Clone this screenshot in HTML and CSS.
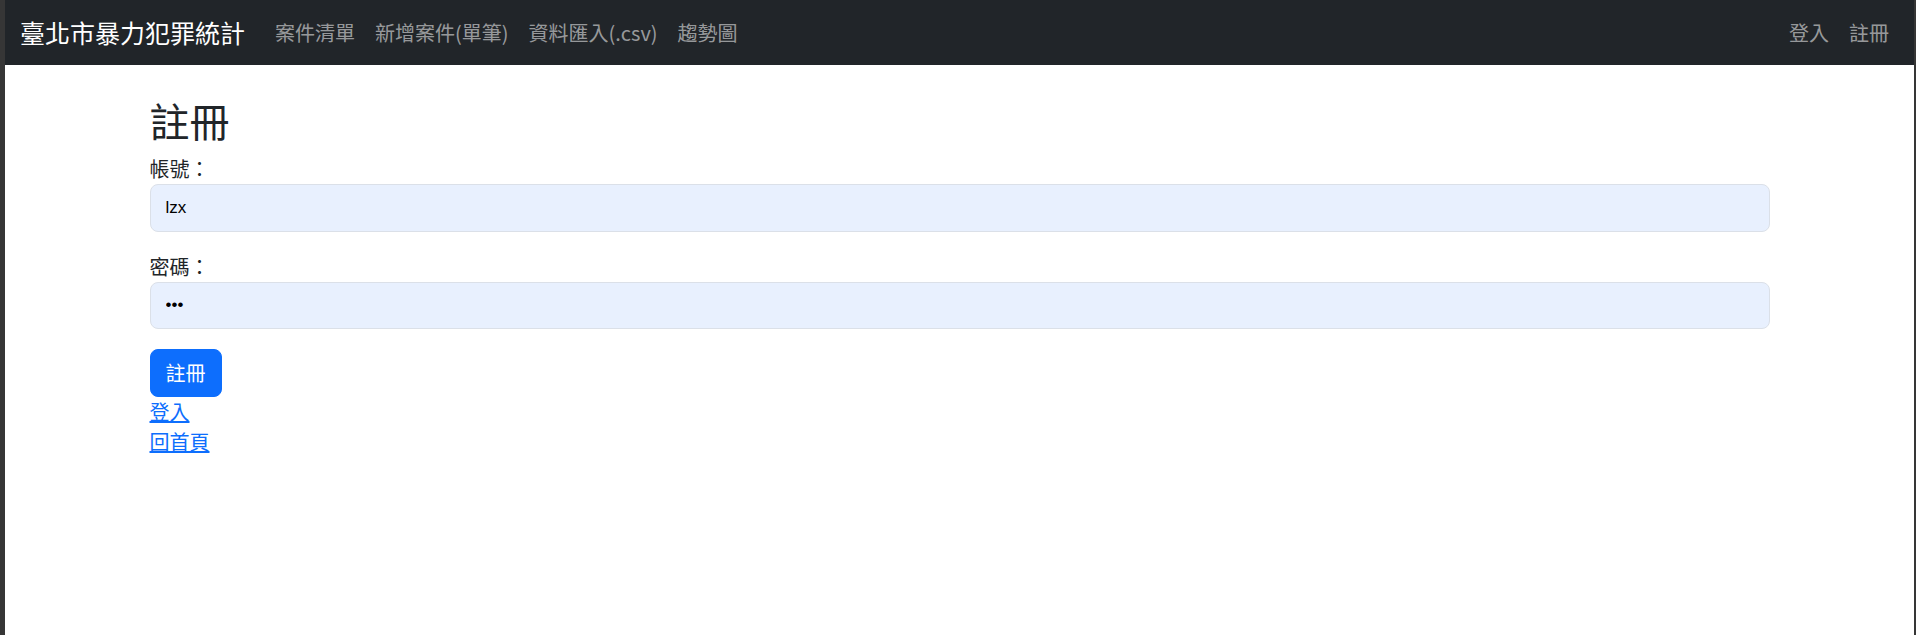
FILE: index.html
```html
<!DOCTYPE html>
<html lang="zh-Hant">
<head>
<meta charset="utf-8">
<title>註冊</title>
<link rel="stylesheet" href="styles.css">
</head>
<body>
<div class="frame">
  <nav class="navbar">
    <a class="brand" href="#">臺北市暴力犯罪統計</a>
    <ul class="nav">
      <li><a class="nav-link" href="#">案件清單</a></li>
      <li><a class="nav-link" href="#">新增案件(單筆)</a></li>
      <li><a class="nav-link" href="#">資料匯入(.csv)</a></li>
      <li><a class="nav-link" href="#">趨勢圖</a></li>
    </ul>
    <ul class="nav nav-right">
      <li><a class="nav-link" href="#">登入</a></li>
      <li><a class="nav-link" href="#">註冊</a></li>
    </ul>
  </nav>
  <main class="container">
    <h2 class="title">註冊</h2>
    <form class="form">
      <div class="field">
        <label class="label" for="acc">帳號：</label>
        <input class="input" id="acc" type="text" value="lzx">
      </div>
      <div class="field">
        <label class="label" for="pwd">密碼：</label>
        <input class="input" id="pwd" type="password" value="abc">
      </div>
      <button class="btn" type="button">註冊</button>
    </form>
    <div class="links">
      <div><a class="link" href="#">登入</a></div>
      <div><a class="link" href="#">回首頁</a></div>
    </div>
  </main>
</div>
</body>
</html>
```

FILE: styles.css
```css
* { box-sizing: border-box; }
html, body { margin: 0; padding: 0; }
body {
  font-family: "Noto Sans CJK TC", "Segoe UI", Roboto, sans-serif;
  font-size: 20px;
  line-height: 1.5;
  color: #212529;
  background: #ffffff;
}
.frame {
  min-height: 100vh;
  border-left: 5px solid #363636;
  border-right: 2px solid #363636;
  display: flex;
  flex-direction: column;
}
.navbar {
  background: #212529;
  display: flex;
  align-items: center;
  padding: 10px 15px;
  height: 65px;
}
.brand {
  color: #ffffff;
  font-size: 25px;
  line-height: 37px;
  padding: 4px 0;
  margin-right: 20px;
  text-decoration: none;
}
.nav {
  list-style: none;
  margin: 0;
  padding: 0;
  display: flex;
}
.nav-right { margin-left: auto; }
.nav-link {
  display: block;
  padding: 8px 10px;
  color: rgba(255, 255, 255, 0.55);
  text-decoration: none;
  line-height: 30px;
}
.container {
  width: 100%;
  max-width: 1650px;
  margin: 31px auto 0;
  padding: 0 15px;
}
.title {
  font-size: 40px;
  font-weight: 400;
  line-height: 1.2;
  margin: 0 0 10px;
}
.form { margin: 0; }
.field { margin-bottom: 20px; }
.label { display: block; line-height: 30px; }
.input {
  display: block;
  width: 100%;
  height: 47.5px;
  padding: 0 15px;
  border: 1px solid #dbe0e8;
  border-radius: 8px;
  background: #e8f0fe;
  color: #000;
  font-family: "Liberation Sans", Arial, sans-serif;
  font-size: 17px;
  outline: none;
}
.btn {
  display: block;
  height: 47.5px;
  padding: 0 15px;
  border: 1px solid #0d6efd;
  border-radius: 8px;
  background: #0d6efd;
  color: #ffffff;
  font-family: inherit;
  font-size: 20px;
  line-height: 30px;
}
.links { line-height: 30px; }
.link { color: #0d6efd; text-decoration: underline; }
```
